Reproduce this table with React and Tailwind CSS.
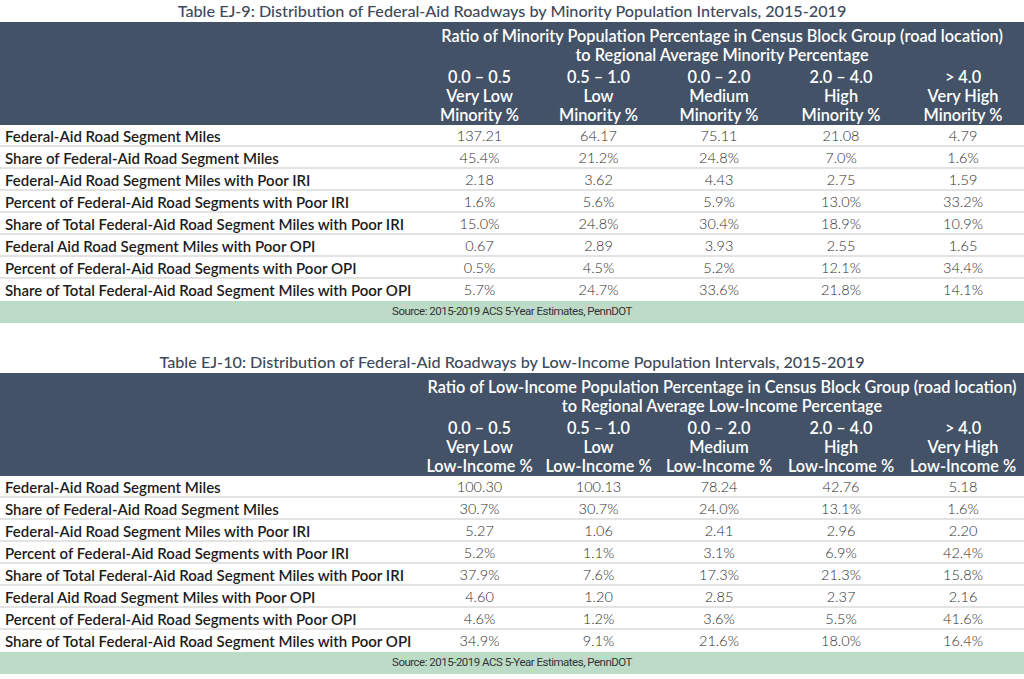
import React from 'react';

const rowLabels = [
  'Federal-Aid Road Segment Miles',
  'Share of Federal-Aid Road Segment Miles',
  'Federal-Aid Road Segment Miles with Poor IRI',
  'Percent of Federal-Aid Road Segments with Poor IRI',
  'Share of Total Federal-Aid Road Segment Miles with Poor IRI',
  'Federal Aid Road Segment Miles with Poor OPI',
  'Percent of Federal-Aid Road Segments with Poor OPI',
  'Share of Total Federal-Aid Road Segment Miles with Poor OPI',
];

const tables = [
  {
    title: 'Table EJ-9: Distribution of Federal-Aid Roadways by Minority Population Intervals, 2015-2019',
    group: 'Minority',
    rows: [
      ['137.21', '64.17', '75.11', '21.08', '4.79'],
      ['45.4%', '21.2%', '24.8%', '7.0%', '1.6%'],
      ['2.18', '3.62', '4.43', '2.75', '1.59'],
      ['1.6%', '5.6%', '5.9%', '13.0%', '33.2%'],
      ['15.0%', '24.8%', '30.4%', '18.9%', '10.9%'],
      ['0.67', '2.89', '3.93', '2.55', '1.65'],
      ['0.5%', '4.5%', '5.2%', '12.1%', '34.4%'],
      ['5.7%', '24.7%', '33.6%', '21.8%', '14.1%'],
    ],
  },
  {
    title: 'Table EJ-10: Distribution of Federal-Aid Roadways by Low-Income Population Intervals, 2015-2019',
    group: 'Low-Income',
    rows: [
      ['100.30', '100.13', '78.24', '42.76', '5.18'],
      ['30.7%', '30.7%', '24.0%', '13.1%', '1.6%'],
      ['5.27', '1.06', '2.41', '2.96', '2.20'],
      ['5.2%', '1.1%', '3.1%', '6.9%', '42.4%'],
      ['37.9%', '7.6%', '17.3%', '21.3%', '15.8%'],
      ['4.60', '1.20', '2.85', '2.37', '2.16'],
      ['4.6%', '1.2%', '3.6%', '5.5%', '41.6%'],
      ['34.9%', '9.1%', '21.6%', '18.0%', '16.4%'],
    ],
  },
];

const intervals = [
  ['0.0 – 0.5', 'Very Low'],
  ['0.5 – 1.0', 'Low'],
  ['0.0 – 2.0', 'Medium'],
  ['2.0 – 4.0', 'High'],
  ['> 4.0', 'Very High'],
];

const cols = 'grid grid-cols-[420px_119px_119px_122px_122px_122px]';

function Table({ t }) {
  return (
    <div>
      <div className="h-[22px] flex items-center justify-center text-[16.2px] font-medium text-[#3d4a5c]">
        {t.title}
      </div>
      <div className={`${cols} bg-[#435266] text-white font-semibold text-[16.3px] leading-[19px] pt-[4px] pb-[2px] h-[103px]`}>
        <div />
        <div className="col-span-5 text-center pb-[3px]">
          Ratio of {t.group} Population Percentage in Census Block Group (road location)
          <br />
          to Regional Average {t.group} Percentage
        </div>
        {intervals.map((iv, i) => (
          <div key={i} className={`text-center ${i === 0 ? 'col-start-2' : ''}`}>
            <div>{iv[0]}</div>
            <div>{iv[1]}</div>
            <div className="whitespace-nowrap">{t.group} %</div>
          </div>
        ))}
      </div>
      {t.rows.map((r, i) => (
        <div
          key={i}
          className={`${cols} h-[22px] items-center ${i < t.rows.length - 1 ? 'border-b-2 border-[#e3e3e3]' : ''}`}
        >
          <div className="pl-[5px] text-[15px] font-semibold text-[#1c1c1c] whitespace-nowrap">{rowLabels[i]}</div>
          {r.map((v, j) => (
            <div key={j} className="text-center text-[14.5px] font-light text-[#2e2e2e]">{v}</div>
          ))}
        </div>
      ))}
      <div className="h-[22px] bg-[#bcdcc8] flex items-center justify-center text-[11.5px] tracking-[-0.5px] text-[#333] font-['Roboto',sans-serif]">
        Source: 2015-2019 ACS 5-Year Estimates, PennDOT
      </div>
    </div>
  );
}

export default function App() {
  return (
    <div className="w-[1024px] h-[679px] bg-white font-['Lato',sans-serif] overflow-hidden">
      <Table t={tables[0]} />
      <div className="h-[28px]" />
      <Table t={tables[1]} />
    </div>
  );
}
